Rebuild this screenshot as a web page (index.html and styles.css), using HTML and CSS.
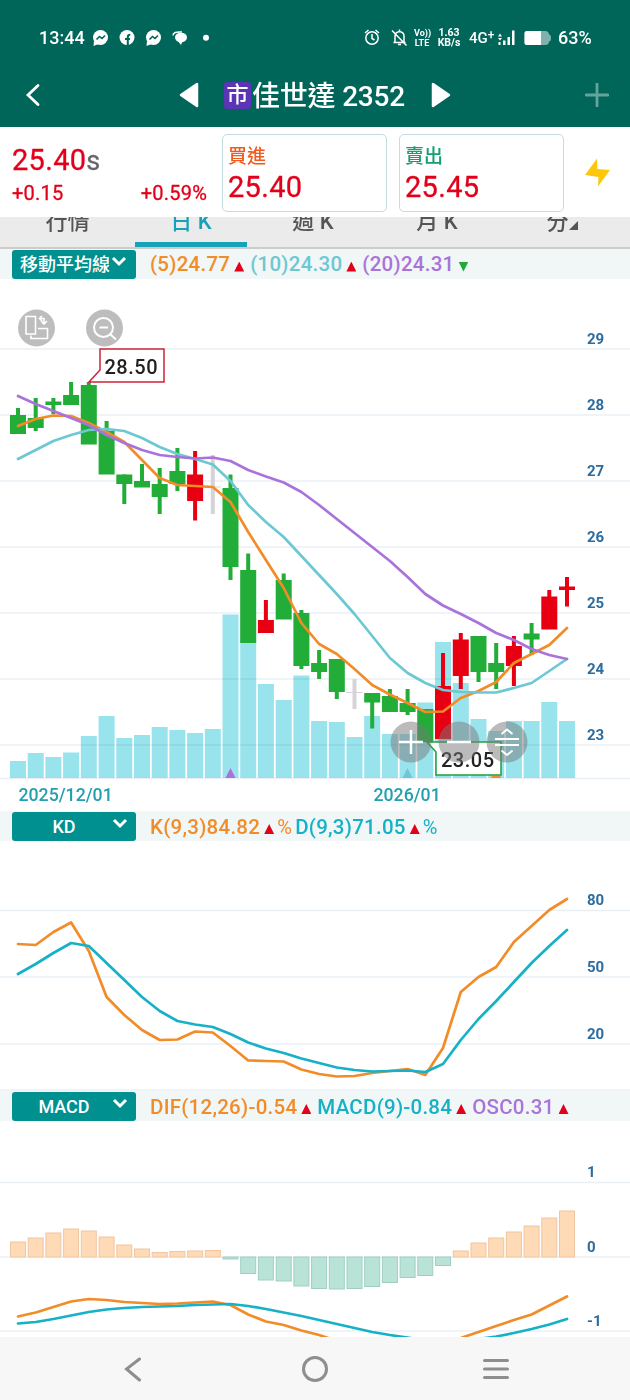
FILE: index.html
```html
<!DOCTYPE html>
<html lang="zh-Hant">
<head>
  <meta charset="utf-8">
  <meta name="viewport" content="width=device-width, initial-scale=1">
  <title>佳世達 2352</title>
  <link rel="stylesheet" href="styles.css">
</head>
<body>
<header class="header">
  <div class="status">
    <span class="clock">13:44</span>
    <svg class="notif" width="120" height="20" viewBox="90 28 120 20">
      <g fill="#fff">
        <circle cx="100.5" cy="37.5" r="7.5"/><path d="M94 41l-.5 5 5-2z"/>
        <circle cx="127" cy="37.5" r="7.5"/>
        <circle cx="153.500" cy="37.5" r="7.5"/><path d="M147 41l-.5 5 5-2z"/>
        <ellipse cx="181" cy="37.500" rx="6" ry="4.800"/><path d="M177 40l4 5 2-5z"/>
        <circle cx="206" cy="37.700" r="3"/>
      </g>
      <path d="M173 35.500c0-3 3-4 9-3.500" fill="none" stroke="#fff" stroke-width="1.500"/>
      <path d="M96.500 39.500l3-3 2.500 2 3-3M149.500 39.500l3-3 2.500 2 3-3" fill="none" stroke="#00665a" stroke-width="1.600"/>
      <path d="M127.800 45v-8c0-1.700.7-2.300 2.500-2.300M125 38.900h5" fill="none" stroke="#00665a" stroke-width="2"/>
    </svg>
    <svg class="alerts" width="46" height="20" viewBox="363 28 46 20" fill="none" stroke="#fff" stroke-width="1.500">
      <circle cx="372" cy="38" r="6.200"/><path d="M372 34v4.500l2.500 1.500M365 33l3.500-3M379 33l-3.500-3"/>
      <path d="M393.500 42.500h12M395 42v-6c0-2.500 1.500-4 4.500-4.500 3 .5 4.500 2 4.500 4.500v6M399.500 31.500v-2M398 44.500h3M392 30.500l14.500 15"/>
    </svg>
    <span class="tiny volte">Vo))<br>LTE</span>
    <span class="tiny speed"><span>1.63</span><span>KB/s</span></span>
    <span class="net">4G<sup>+</sup></span>
    <svg class="signal" width="18" height="18" viewBox="499 29 18 18" fill="#fff">
      <path d="M504 40.500h2.500v4.500H504zM508.500 37h2.500v8h-2.500zM513 30.500h2.500V45H513z"/>
      <path d="M499 36.500l2-3 2 3zM499 38h4l-2 2.500zM499.500 42h2v3h-2z"/>
    </svg>
    <svg class="battery" width="28" height="16" viewBox="525 30 28 16">
      <path d="M528 31h18q4 0 4 3.500 2 0 2 3.500t-2 3.500q0 3.500-4 3.500h-18q-2.500 0-2.500-2.500v-9q0-2.500 2.500-2.500z" fill="#7fb2ac"/>
      <path d="M528 31h14v14h-14q-2.500 0-2.500-2.500v-9q0-2.500 2.500-2.500z" fill="#fff"/>
    </svg>
    <span class="percent">63%</span>
  </div>
  <div class="titlebar">
    <svg class="back" width="16" height="24" viewBox="0 0 16 24"><path d="M13 2.500L3 12l10 9.500" fill="none" stroke="#fff" stroke-width="2.800" stroke-linecap="round"/></svg>
    <div class="stock">
      <svg width="20" height="26" viewBox="0 0 20 26"><path d="M18 2v22L2 13z" fill="#fff" stroke="#fff" stroke-width="2.500" stroke-linejoin="round"/></svg>
      <div class="name"><span class="market">市</span><span class="title">佳世達 2352</span></div>
      <svg width="20" height="26" viewBox="0 0 20 26"><path d="M2 2v22l16-11z" fill="#fff" stroke="#fff" stroke-width="2.500" stroke-linejoin="round"/></svg>
    </div>
    <svg class="add" width="24" height="24" viewBox="0 0 24 24"><path d="M12 1v22M1 12h22" stroke="#66a39c" stroke-width="2.800" stroke-linecap="round"/></svg>
  </div>
</header>

<section class="quote">
  <div class="last">
    <div class="price">25.40<span class="suffix">s</span></div>
    <div class="change"><span>+0.15</span><span>+0.59%</span></div>
  </div>
  <div class="card"><span class="buy">買進</span><b>25.40</b></div>
  <div class="card"><span class="sell">賣出</span><b>25.45</b></div>
  <svg class="bolt" width="28" height="30" viewBox="0 0 28 30"><path d="M13 .5L1 17l13.500 2L14 28.500 26 12l-12.500-1z" fill="#fdc70c"/></svg>
</section>

<nav class="tabs">
  <span>行情</span><span class="active">日 K</span><span>週 K</span><span>月 K</span>
  <span class="minute">分<svg width="9" height="9" viewBox="0 0 9 9"><path d="M9 0v9H0z" fill="#555"/></svg></span>
</nav>

<div class="indicator first">
  <div class="select"><span>移動平均線</span><svg width="16" height="11" viewBox="0 0 16 11"><path d="M2 2l6 6 6-6"/></svg></div>
  <div class="values ma">
    <span class="orange">(5)24.77</span><i class="up"></i><span class="sky">(10)24.30</span><i class="up"></i><span class="purple">(20)24.31</span><i class="down"></i>
  </div>
</div>
<svg class="chart" id="kline" width="630" height="532" viewBox="0 279 630 532"></svg>

<div class="indicator">
  <div class="select short"><span>KD</span><svg width="16" height="11" viewBox="0 0 16 11"><path d="M2 2l6 6 6-6"/></svg></div>
  <div class="values kd">
    <span class="orange">K(9,3)84.82</span><i class="up"></i><span class="orange pct">%</span><span class="cyan">D(9,3)71.05</span><i class="up"></i><span class="cyan pct">%</span>
  </div>
</div>
<svg class="chart" id="kd" width="630" height="250" viewBox="0 841 630 250"></svg>

<div class="indicator">
  <div class="select short"><span>MACD</span><svg width="16" height="11" viewBox="0 0 16 11"><path d="M2 2l6 6 6-6"/></svg></div>
  <div class="values macd">
    <span class="orange">DIF(12,26)-0.54</span><i class="up"></i><span class="cyan">MACD(9)-0.84</span><i class="up"></i><span class="purple">OSC0.31</span><i class="up"></i>
  </div>
</div>
<svg class="chart" id="macd" width="630" height="216" viewBox="0 1121 630 216"></svg>

<footer class="navbar">
  <svg width="18" height="26" viewBox="0 0 18 26"><path d="M15.500 3L2.500 13l13 11"/></svg>
  <svg width="28" height="28" viewBox="0 0 28 28"><circle cx="14" cy="14" r="11.500"/></svg>
  <svg width="28" height="24" viewBox="0 0 28 24"><path d="M2.500 3.500h23M2.500 12h23M2.500 20.500h23"/></svg>
</footer>
<script src="chart.js"></script>
</body>
</html>
```
FILE: styles.css
```css
* {box-sizing: border-box;}
body {margin: 0; width: 630px; height: 1400px; overflow: hidden; background: #fff; font-family: Roboto, "Noto Sans CJK TC", sans-serif;}
svg {display: block; flex: none;}

.header {height: 127px; background: #00665a; color: #fff;}
.status {display: flex; align-items: center; height: 64px; padding: 11px 0 0 39px; white-space: nowrap;}
.clock {width: 51px; font-size: 18px; font-weight: 500;}
.notif {margin-right: 153px;}
.tiny {font-weight: 700; text-align: center;}
.volte {width: 16px; margin-left: 5px; font-size: 9px; line-height: 10px;}
.speed {display: flex; flex-direction: column; width: 24px; margin-left: 7px; font-size: 10.5px; line-height: 10px;}
.net {width: 29px; margin-left: 8px; font-size: 15px; font-weight: 500;}
.net sup {font-size: 12px; line-height: 0; vertical-align: 4px;}
.battery {margin-left: 8px;}
.percent {margin-left: 6px; font-size: 18px; font-weight: 500;}
.titlebar {display: flex; align-items: center; justify-content: space-between; height: 62px; padding: 0 21px 0 25px;}
.stock {display: flex; align-items: center; width: 272px; margin-left: 3px; justify-content: space-between;}
.name {display: flex; align-items: center; width: 181px;}
.market {width: 27px; height: 27px; border-radius: 3px; background: #5b35b5; font-size: 22px; line-height: 26px; text-align: center; font-weight: 500;}
.title {font-size: 28px; line-height: 36px; padding: 4px 0 0 1px; white-space: nowrap; font-weight: 500; letter-spacing: -.2px;}

.quote {display: flex; height: 90px; padding: 7px 0 0 12px;}
.last {width: 195px; margin-right: 15px; color: #e2001a;}
.price {margin-top: 8px; font-size: 29px; line-height: 36px; letter-spacing: .3px; -webkit-text-stroke: .3px;}
.suffix {color: #666; font-size: 27px;}
.change {display: flex; justify-content: space-between; font-size: 20px; line-height: 28px; letter-spacing: .2px; -webkit-text-stroke: .3px;}
.card {width: 165px; height: 78px; margin-right: 12px; padding: 9px 5px; border: 1px solid #c3dde0; border-radius: 5px;}
.card span {display: block; font-size: 19px; line-height: 26px; font-weight: 500;}
.card b {display: block; color: #e2001a; font-size: 29px; line-height: 35px; font-weight: 400; letter-spacing: .3px; -webkit-text-stroke: .3px;}
.buy {color: #f2591d;}
.sell {color: #17a06f;}
.bolt {margin: 24px 0 0 8px;}

.tabs {display: flex; height: 32px; background: #ebebeb; border-bottom: 2px solid #ccc; overflow: hidden; color: #555;}
.tabs span {width: 112px; height: 31px; flex: none; text-align: center; font-size: 22px; line-height: 10px; font-weight: 500;}
.tabs span:first-child {width: 135px;}
.tabs .active {color: #17a2b8; border-bottom: 6px solid #17a2b8;}
.tabs span:nth-child(3) {width: 132px;}
.tabs span:nth-child(4) {width: 116px;}
.tabs .minute {display: flex; justify-content: center; width: 134px;}
.minute svg {margin-top: 4px;}

.indicator {display: flex; align-items: center; height: 30px; background: #f1f6f7; position: relative; z-index: 1;}
.select {display: flex; align-items: center; width: 124px; height: 29px; margin-left: 12px; padding-left: 8px; border-radius: 3px; background: #009090; color: #fff; font-size: 18px; line-height: 29px; white-space: nowrap; font-weight: 500;}
.select path {fill: none; stroke: #fff; stroke-width: 3;}
.select svg {margin: -6px 0 0 1px;}
.short {padding-left: 0;}
.short span {width: 99px; padding: 1px 0 0 5px; text-align: center;}
.values {display: flex; align-items: center; margin-left: 14px; padding-top: 1px; font-size: 20.5px; line-height: 30px; white-space: nowrap; letter-spacing: .25px;}
.first .values {padding-top: 0;}
.up, .down {flex: none; width: 10px; height: 10px; margin: 5px 6px 0 4px; background: #e2001a; clip-path: polygon(50% 0, 100% 100%, 0 100%);}
.down {background: #22a93a; clip-path: polygon(0 0, 100% 0, 50% 100%);}
.orange {color: #f28c28;}
.sky {color: #6cc8d3;}
.purple {color: #aa73da;}
.cyan {color: #16b1c7;}
.values span {font-weight: 500;}
.values .pct {width: 18px; margin-left: -3px; font-size: 20px; font-weight: 400;}

.chart {overflow: hidden; font-family: Roboto, sans-serif;}
.grid {stroke: #e8f0f5; stroke-width: 1.500;}
.axis {fill: #2d6c9f; font-size: 15px; font-weight: 700;}
.date {fill: #239fae; font-size: 17.700px; font-weight: 500;}
.callout {fill: #222; font-size: 20px; font-weight: 500; letter-spacing: .5px;}
.line {fill: none; stroke-width: 2.700; stroke-linejoin: round; stroke-linecap: round;}
.icon {fill: none; stroke: #fff; stroke-width: 2;}
.thin {stroke-width: 1.600;}

.navbar {display: flex; align-items: center; justify-content: space-between; height: 63px; padding: 0 120px 0 124px; background: #f7f7f7;}
.navbar svg {fill: none; stroke: #8e8e8e; stroke-width: 3; stroke-linecap: round;}
.navbar svg:nth-child(2) {margin-left: 5px;}
```
FILE: chart.js
```js
var STEP = 17.71, X0 = 18;
var GREEN = "#22ac38", RED = "#e60012", GREY = "#d5d3d8";

function x(i) { return X0 + i * STEP; }
function rect(left, top, w, h, attrs) {
  return '<rect x="' + left.toFixed(1) + '" y="' + top + '" width="' + w + '" height="' + h + '" ' + attrs + '/>';
}
function line(ys, color) {
  var pts = ys.map(function (y, i) { return x(i).toFixed(1) + "," + y; }).join(" ");
  return '<polyline class="line" points="' + pts + '" stroke="' + color + '"/>';
}
function grid(rows) {
  return rows.map(function (y) { return '<path class="grid" d="M0 ' + y + 'H630"/>'; }).join("");
}
function axis(labels) {
  return labels.map(function (l) { return '<text class="axis" x="587" y="' + l[0] + '">' + l[1] + '</text>'; }).join("");
}

// volume bar tops
var volume = [761,753,757,752.5,736,716,738,735,727,730,733,729,614.5,640,684,700,675.5,721,722,737,716,734,734,702.5,642,683,719,731,721,721,702,721];

// color, body top, body bottom, high, low
var candles = [
  [GREEN,415,434,408,434],[GREEN,418,428,398,431],[GREEN,401.5,405,398,414],[GREEN,395,405,382,405],
  [GREEN,385,444.5,382,444],[GREEN,431,474.5,421,474],[GREEN,474.5,484,474.5,504],[GREEN,481,487.5,464,487],
  [GREEN,484,497,468,514],[GREEN,471,484,448,491],[RED,474.5,501,451,520.5],[GREY,486.5,487.5,455,514],
  [GREEN,488,567,474.5,580],[GREEN,570,643,553.5,643],[RED,620,633,600,633],[GREEN,580,619.5,573.5,619],
  [GREEN,613,666,610,669],[GREEN,663,672,650,679],[GREEN,659,692,659,699],[GREY,692,693,679,709],
  [GREEN,693,702.5,693,728.5],[GREEN,696,712,689,712],[GREEN,703,712,689,715],[GREEN,709,742,709,742],
  [RED,686,739,653,739],[RED,639.5,676,633,689],[GREEN,636,672,636,682],[GREEN,663,672,643,689],
  [RED,646,666,636,686],[GREEN,633.5,639.5,623,655],[RED,596.5,629.5,590,629],[RED,586.5,590,577,606.5]
];
var ma5 = [426,419,415.5,416,423,432,442,460,478,485,486,487,502,532,560,588,623,644,654,669,685,694.5,703,712,711.5,698,691,682,663,654,645,628];
var ma10 = [459,450,441,435,430,429,431,438,447,454,459,464.5,481,505,522,537,556,575,594,614,636,658,673,683,690,692,692.5,692.5,688,683,671,659];
var ma20 = [396,404,411,418,425,435,443,450,455,457,458.5,457.5,461,470,476.5,482.5,492,505,519,533,547,561,577,594,605.5,614,623,633,640,649,655,659];

var html = "";
volume.forEach(function (y, i) { html += rect(x(i) - 8, y, 16, 778 - y, 'fill="#99e3ed"'); });
html += '<g style="mix-blend-mode:multiply">' + grid([349,415,481,547,613,679,745,778.5]) + '</g>';
html += '<path d="M225.500 778l5-10 5 10z" fill="#aa73da"/><path d="M402.500 778l5-10 5 10z" fill="#6cc8d3"/>';
candles.forEach(function (c, i) {
  html += rect(x(i) - 8, c[1], 16, c[2] - c[1], 'fill="' + c[0] + '"');
  html += rect(x(i) - 2, c[3], 4, c[4] - c[3], 'fill="' + c[0] + '"');
});
html += line(ma5, "#f28c28") + line(ma10, "#6cc8d3") + line(ma20, "#aa73da");
html += axis([[343.5,29],[409.5,28],[475.5,27],[541.5,26],[607.5,25],[673.5,24],[739.5,23]]);
html += '<path d="M89 382l11-12v-21h64v33z" fill="#fff" stroke="#cf2339" stroke-width="1.500"/><text class="callout" x="104.500" y="373.500">28.50</text>';
html += '<path d="M427 742l9 10v23h65v-33z" fill="#fff" stroke="#22a040" stroke-width="1.500"/><text class="callout" x="441" y="766.500">23.05</text>';
// orange marker shows below the callout
html += '<path d="M491 778l1-2h8l1 2z" fill="#f28c28"/>';
// rotate and zoom-out buttons
html += '<circle cx="36.500" cy="328" r="18.500" fill="#bdbdbd"/><circle cx="104.500" cy="328" r="18.500" fill="#bdbdbd"/>';
html += '<path class="icon thin" d="M26 316.500h9.500v17.500H26zM38 328.500h9.500v10H31v-3M40 318.500h4v5M41 321l3 3 3-3M42 316l-2.500 2.500 2.500 2.500"/>';
html += '<g class="icon"><circle cx="103.500" cy="327.500" r="9.500"/><path d="M99.500 327.500h8.500M110.500 334.500l5.500 5"/></g>';
// zoom controls
html += '<g fill="#777" fill-opacity=".5"><circle cx="411" cy="742" r="20.500"/><circle cx="459" cy="742" r="20.500"/><circle cx="507" cy="742" r="20.500"/></g>';
html += '<path d="M399 742h24M411 730v24M447 742h24" stroke="#fff" stroke-width="2.500"/>';
html += '<path class="icon" d="M495 739h24M495 745h24M501.500 734l5.500-4.500 5.500 4.500M501.500 750.500l5.500 4.500 5.500-4.500"/>';
html += '<text class="date" x="18.500" y="801">2025/12/01</text><text class="date" x="373.500" y="801">2026/01</text>';
document.getElementById("kline").innerHTML = html;

var k = [944,945,932,922.5,951,997,1015,1030,1040,1039.5,1031.5,1032.5,1046,1060.5,1061,1061.5,1069.5,1074,1076.5,1076,1073,1071,1069,1075,1048,992,977,967,942,926,910,899];
var d = [974,964,953,943,946,963,980,997,1011,1021,1024.5,1027,1034,1042.5,1048.5,1053,1058.5,1063,1067.5,1070,1071.5,1071,1070.5,1072,1064,1040,1019,1001,982,963,946,930];
document.getElementById("kd").innerHTML = grid([910.5,977,1044,1090]) + line(k, "#f28c28") + line(d, "#16b1c7") +
  axis([[905,80],[971.5,50],[1038.5,20]]);

var osc = [1242,1238,1233,1229,1231,1237,1245,1249,1252.5,1251.5,1251,1250.5,1259,1273.5,1280,1281,1286,1288.5,1289,1288.5,1286.5,1282.5,1277.5,1275.5,1265.5,1251,1243,1238,1232,1226,1218,1211];
var dif = [1316.5,1312.5,1307,1301.5,1299,1300,1302,1303,1304,1303.5,1302.5,1301.5,1305,1314.5,1321.5,1325,1330.5,1335,1341,1346,1350,1352,1350,1347,1343,1338,1332,1326,1320,1314.5,1305.5,1296.5];
var sig = [1323.5,1322,1319,1315.5,1312,1309.5,1308,1307,1306.5,1306,1305,1304.5,1304,1306,1309,1312.5,1316,1320,1324,1328,1332,1335,1337.5,1341,1342,1341,1339,1336.5,1333,1329,1324.5,1319];
html = grid([1182.5,1257,1331]);
osc.forEach(function (y, i) {
  var up = y < 1257;
  html += rect(x(i) - 7.5, up ? y : 1257, 15, Math.abs(1257 - y), up ? 'fill="#ffdab6" stroke="#f0c6a0"' : 'fill="#bae3d7" stroke="#9fcfc2"');
});
html += line(dif, "#f28c28") + line(sig, "#16b1c7") + axis([[1177,1],[1251.5,0],[1325.5,-1]]);
document.getElementById("macd").innerHTML = html;
```
